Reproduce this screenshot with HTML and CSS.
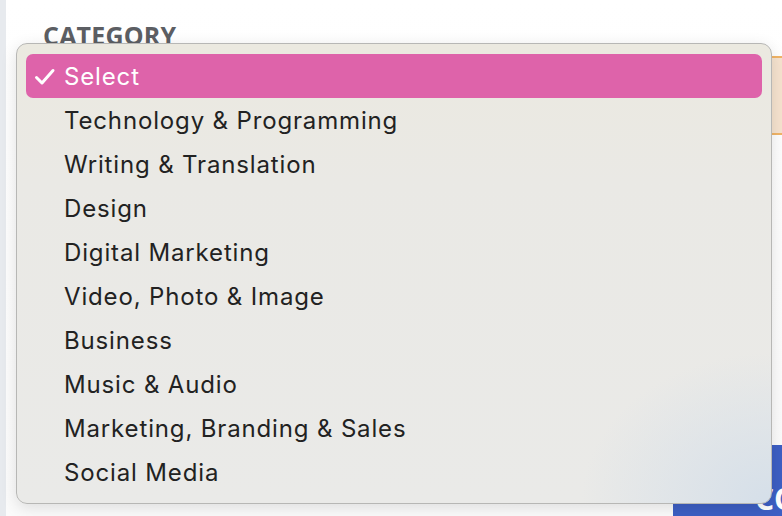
FILE: index.html
```html
<!DOCTYPE html>
<html lang="en">
<head>
<meta charset="utf-8">
<title>Category select</title>
<link rel="stylesheet" href="styles.css">
</head>
<body>
<div class="page">
  <div class="rail"></div>
  <main class="main">
    <form class="form">
      <label class="label">CATEGORY</label>
      <div class="field"></div>
      <div class="actions">
        <button type="button" class="btn">CONTINUE</button>
      </div>
    </form>
  </main>
  <ul class="menu" role="listbox">
    <li class="item selected">
      <svg class="check" width="22" height="18" viewBox="0 0 22 18"><path d="M2.5 9.5 L8 15 L19 2.5" fill="none" stroke="#fff" stroke-width="3" stroke-linecap="round" stroke-linejoin="round"/></svg>
      Select
    </li>
    <li class="item">Technology &amp; Programming</li>
    <li class="item">Writing &amp; Translation</li>
    <li class="item">Design</li>
    <li class="item">Digital Marketing</li>
    <li class="item">Video, Photo &amp; Image</li>
    <li class="item">Business</li>
    <li class="item">Music &amp; Audio</li>
    <li class="item">Marketing, Branding &amp; Sales</li>
    <li class="item">Social Media</li>
  </ul>
</div>
</body>
</html>
```
FILE: styles.css
```css
html, body {
  margin: 0;
  padding: 0;
  width: 782px;
  height: 516px;
  overflow: hidden;
  background: #ffffff;
}

.page {
  position: relative;
  display: flex;
  width: 782px;
  height: 516px;
  overflow: hidden;
  background: linear-gradient(180deg, #ffffff 0%, #fbfbfb 100%);
}

.rail {
  width: 6px;
  flex: none;
  background: #e7eaee;
}

.main {
  flex: 1;
  min-width: 0;
  padding: 20px 0 0 37px;
}

.form {
  display: flex;
  flex-direction: column;
}

.label {
  font-family: "Open Sans", "Liberation Sans", sans-serif;
  font-weight: 700;
  font-size: 25px;
  line-height: 30px;
  color: #5c5e63;
  letter-spacing: 0.2px;
}

.field {
  margin-top: 6px;
  height: 75px;
  width: 800px;
  border: 2px solid #f1b466;
  border-radius: 6px;
  background: linear-gradient(90deg, #eff1f3 0%, #f6e3cf 2%, #f6e3cf 100%);
}

.actions {
  display: flex;
  margin-top: 310px;
  padding-left: 630px;
}

.btn {
  flex: none;
  width: 300px;
  height: 80px;
  border: 0;
  background: #3d5fc4;
  color: #ffffff;
  font-family: "Open Sans", "Liberation Sans", sans-serif;
  font-weight: 700;
  font-size: 30px;
  text-align: left;
  padding: 26px 0 0 82px;
}

.menu {
  position: absolute;
  left: 16px;
  top: 43px;
  width: 736px;
  margin: 0;
  padding: 10px 9px 9px 9px;
  list-style: none;
  border: 1px solid #b7b7b5;
  border-radius: 11px;
  background:
    radial-gradient(ellipse 190px 150px at 100% 100%, #d5dfe9 0%, rgba(233, 233, 231, 0) 100%),
    linear-gradient(180deg, #ebe9e0 0%, #eae9e5 30%, #eaeae8 100%);
  box-shadow: 0 4px 16px rgba(0, 0, 0, 0.12);
  font-family: Inter, "Liberation Sans", sans-serif;
}

.item {
  position: relative;
  height: 44px;
  display: flex;
  align-items: center;
  padding-left: 38px;
  font-size: 24px;
  letter-spacing: 0.85px;
  color: #222222;
  border-radius: 7px;
}

.item.selected {
  background: #de63aa;
  color: #ffffff;
}

.check {
  position: absolute;
  left: 8px;
  top: 14px;
}
```
